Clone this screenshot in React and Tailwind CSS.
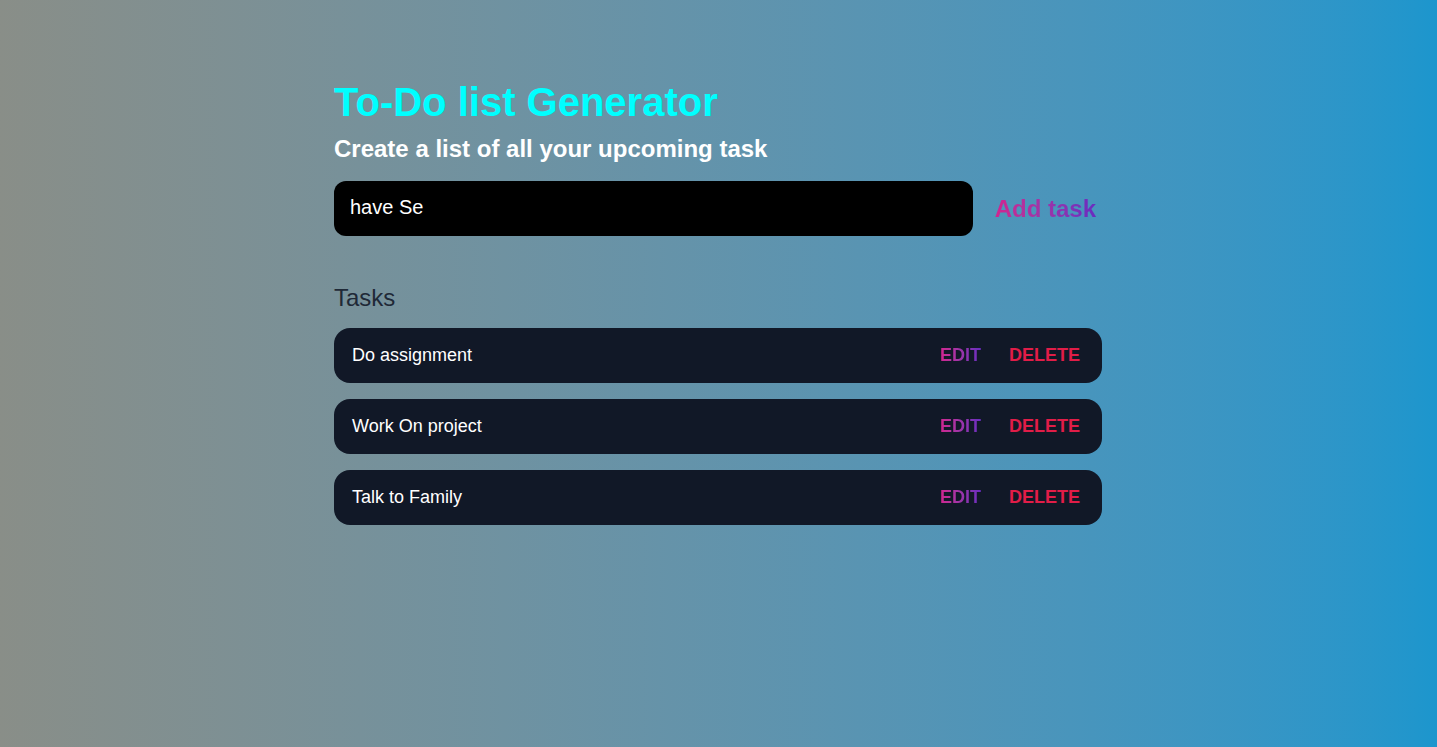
export default function App() {
  const tasks = ["Do assignment", "Work On project", "Talk to Family"];
  return (
    <div
      className="flex min-h-[747px] w-full justify-center bg-gradient-to-r from-[#898e88] to-[#1c96cd] pr-px"
      style={{ fontFamily: '"Liberation Sans", Arial, sans-serif' }}
    >
      <div className="w-[768px] pt-[78px]">
        <h1 className="text-[40px] leading-[48px] font-bold text-[#00ffff]">To-Do list Generator</h1>
        <h2 className="mt-[7px] text-2xl leading-8 font-bold text-white">Create a list of all your upcoming task</h2>
        <div className="mt-[16px] flex items-center">
          <div className="flex h-[55px] w-[639px] items-center rounded-xl bg-black px-4 pb-[3px] text-xl text-white">
            have Se
          </div>
          <button className="flex flex-1 justify-end pr-[6px] text-2xl font-bold">
            <span className="bg-gradient-to-r from-[#d1238f] to-[#6a2bc0] bg-clip-text text-transparent">Add task</span>
          </button>
        </div>
        <div className="mt-[46px] text-2xl leading-8 text-[#1f2937]">Tasks</div>
        <div className="mt-[14px] flex flex-col gap-4">
          {tasks.map((t) => (
            <div key={t} className="flex h-[55px] items-center rounded-2xl bg-[#111827] pl-[18px] pr-[22px]">
              <span className="-mt-[2px] flex-1 text-lg leading-6 text-white">{t}</span>
              <span className="-mt-px bg-gradient-to-r from-[#d1238f] to-[#6a2bc0] bg-clip-text text-lg leading-6 font-bold text-transparent">EDIT</span>
              <span className="-mt-px ml-[28px] text-lg leading-6 font-bold text-[#e11d48]">DELETE</span>
            </div>
          ))}
        </div>
      </div>
    </div>
  );
}
